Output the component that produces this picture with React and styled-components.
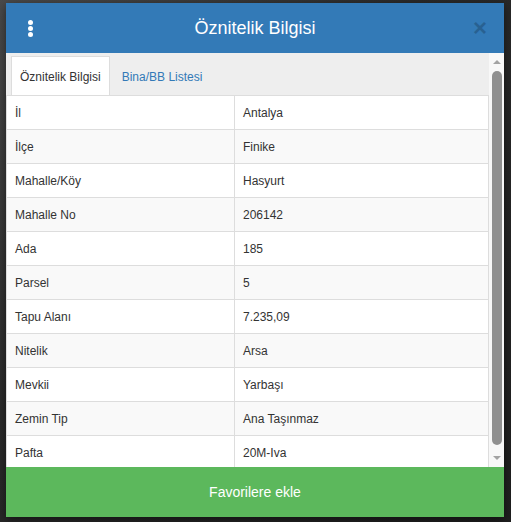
import React from 'react'
import styled, { createGlobalStyle } from 'styled-components';

const rows = [
  ['İl', 'Antalya'],
  ['İlçe', 'Finike'],
  ['Mahalle/Köy', 'Hasyurt'],
  ['Mahalle No', '206142'],
  ['Ada', '185'],
  ['Parsel', '5'],
  ['Tapu Alanı', '7.235,09'],
  ['Nitelik', 'Arsa'],
  ['Mevkii', 'Yarbaşı'],
  ['Zemin Tip', 'Ana Taşınmaz'],
  ['Pafta', '20M-Iva'],
];

function App() {
  return (
    <>
      <GlobalStyle />
      <Page>
        <Panel>
          <Header>
            <Kebab>
              <span />
              <span />
              <span />
            </Kebab>
            <Title>Öznitelik Bilgisi</Title>
            <Close>×</Close>
          </Header>
          <Body>
            <Content>
              <TabBar>
                <Tab $active>Öznitelik Bilgisi</Tab>
                <Tab>Bina/BB Listesi</Tab>
              </TabBar>
              <Table>
                <tbody>
                  {rows.map(([k, v], i) => (
                    <Row key={k} $striped={i % 2 === 1}>
                      <Cell>{k}</Cell>
                      <Cell>{v}</Cell>
                    </Row>
                  ))}
                </tbody>
              </Table>
            </Content>
            <ScrollBar>
              <Arrow />
              <Thumb />
              <Arrow $down />
            </ScrollBar>
          </Body>
          <AddButton>Favorilere ekle</AddButton>
        </Panel>
      </Page>
    </>
  );
}

const GlobalStyle = createGlobalStyle`
  html, body {
    margin: 0;
    padding: 0;
    background: #2e2e2e;
  }
  body {
    font-family: "Liberation Sans", Arial, sans-serif;
  }
`;

const Page = styled.div`
  width: 511px;
  height: 522px;
  padding: 3px 0 0 6px;
  box-sizing: border-box;
  background: linear-gradient(135deg, #4a4a4a 0%, #2a2a2a 40%, #1f1f1f 100%);
`;

const Panel = styled.div`
  width: 498px;
  height: 514px;
  display: flex;
  flex-direction: column;
  background: #fff;
  box-shadow: 0 3px 9px rgba(0, 0, 0, 0.5);
`;

const Header = styled.div`
  height: 50px;
  flex: none;
  background: #337ab7;
  display: grid;
  grid-template-columns: 48px 1fr 48px;
  align-items: center;
`;

const Kebab = styled.div`
  display: flex;
  flex-direction: column;
  align-items: center;
  gap: 1px;
  span {
    width: 5px;
    height: 5px;
    border-radius: 50%;
    background: #fff;
  }
`;

const Title = styled.div`
  text-align: center;
  color: #fff;
  font-size: 18px;
  line-height: 20px;
`;

const Close = styled.div`
  text-align: center;
  font-size: 24px;
  font-weight: bold;
  color: #000;
  opacity: 0.2;
  line-height: 20px;
`;

const Body = styled.div`
  flex: 1;
  display: flex;
  overflow: hidden;
`;

const Content = styled.div`
  flex: 1;
  display: flex;
  flex-direction: column;
  overflow: hidden;
`;

const TabBar = styled.div`
  height: 42px;
  flex: none;
  box-sizing: border-box;
  background: #eee;
  padding: 3px 0 0 5px;
  display: flex;
  align-items: stretch;
`;

const Tab = styled.div`
  display: flex;
  align-items: center;
  padding: 0 8px;
  margin-right: 3px;
  font-size: 12px;
  color: ${p => (p.$active ? '#333' : '#337ab7')};
  background: ${p => (p.$active ? '#fff' : 'transparent')};
  border: 1px solid ${p => (p.$active ? '#ddd' : 'transparent')};
  border-bottom: none;
  padding-top: 1px;
`;

const Table = styled.table`
  width: 100%;
  border-collapse: collapse;
  border: 1px solid #ddd;
  border-top: none;
  table-layout: fixed;
  font-size: 12px;
  color: #333;
`;

const Row = styled.tr`
  background: ${p => (p.$striped ? '#f9f9f9' : '#fff')};
`;

const Cell = styled.td`
  height: 33px;
  padding: 0 8px;
  border-top: 1px solid #ddd;
  border-left: 1px solid #ddd;
  &:first-child {
    width: 211px;
  }
`;

const ScrollBar = styled.div`
  width: 15px;
  flex: none;
  background: #f8f8f8;
  display: flex;
  flex-direction: column;
  align-items: center;
  padding: 7px 0 7px;
  box-sizing: border-box;
`;

const Arrow = styled.div`
  width: 0;
  height: 0;
  border-left: 4px solid transparent;
  border-right: 4px solid transparent;
  ${p => (p.$down ? 'border-top: 4px solid #a3a3a3;' : 'border-bottom: 4px solid #a3a3a3;')}
  flex: none;
`;

const Thumb = styled.div`
  width: 10px;
  height: 374px;
  margin: 7px 0 11px;
  border-radius: 5px;
  background: #909090;
`;

const AddButton = styled.button`
  height: 50px;
  flex: none;
  border: none;
  background: #5cb85c;
  color: #fff;
  font-family: "Liberation Sans", Arial, sans-serif;
  font-size: 14px;
  cursor: pointer;
`;

export default App;
